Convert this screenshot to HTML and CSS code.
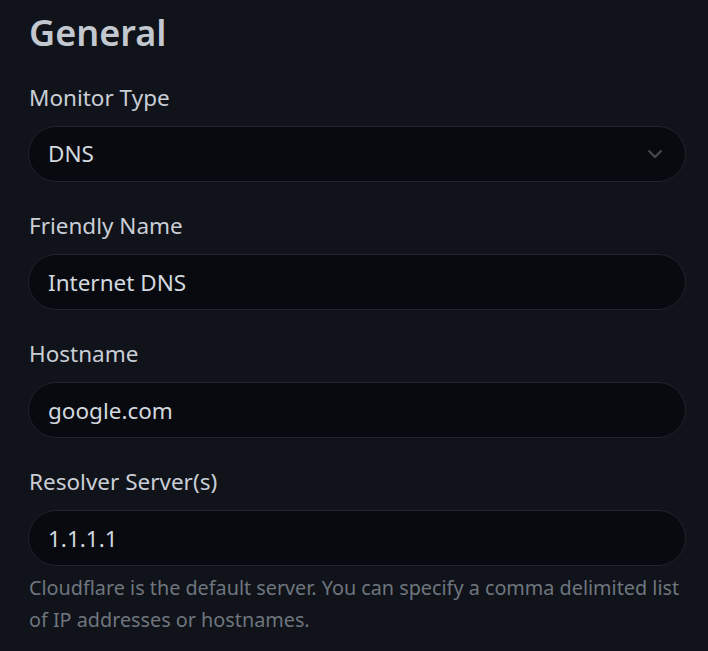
FILE: index.html
```html
<!DOCTYPE html>
<html lang="en">
  <head>
    <meta charset="UTF-8" />
    <meta name="viewport" content="width=device-width, initial-scale=1.0" />
    <title>General</title>
    <link rel="stylesheet" href="styles.css">
  </head>
  <body>
    <div class="form-section">
      <h2 class="section-title">General</h2>

      <div class="field">
        <label class="field-label" for="type">Monitor Type</label>
        <div class="select-wrap">
          <select id="type" class="field-input">
            <option>DNS</option>
          </select>
          <svg class="chevron" width="16" height="10" viewBox="0 0 16 10">
            <path d="M1.5 1.5 L8 8 L14.5 1.5" fill="none" stroke="#45484e" stroke-width="2.2" />
          </svg>
        </div>
      </div>

      <div class="field">
        <label class="field-label" for="name">Friendly Name</label>
        <input id="name" class="field-input" type="text" value="Internet DNS" />
      </div>

      <div class="field">
        <label class="field-label" for="hostname">Hostname</label>
        <input id="hostname" class="field-input" type="text" value="google.com" />
      </div>

      <div class="field">
        <label class="field-label" for="resolver">Resolver Server(s)</label>
        <input id="resolver" class="field-input" type="text" value="1.1.1.1" />
        <div class="help-text">
          Cloudflare is the default server. You can specify a comma delimited list of IP addresses or hostnames.
        </div>
      </div>
    </div>
  </body>
</html>
```

FILE: styles.css
```css
html,
body {
  margin: 0;
  background-color: #101319;
}
body {
  font-family: "Noto Sans", "Open Sans", sans-serif;
  font-size: 24px;
  line-height: 1.5;
  color: #c9ced6;
}
.form-section {
  padding: 0 22px 0 28px;
}
.section-title {
  font-size: 36px;
  font-weight: 600;
  line-height: 43px;
  margin: 11px 0 24px 1px;
  color: #c3c8d0;
}
.field {
  margin-bottom: 24px;
}
.field-label {
  display: block;
  margin: 0 0 8px 1px;
  font-size: 22.5px;
  line-height: 40px;
}
.select-wrap {
  position: relative;
}
.field-input {
  display: block;
  width: 100%;
  box-sizing: border-box;
  height: 56px;
  padding: 9px 19px;
  font-family: inherit;
  font-size: 22.5px;
  line-height: 36px;
  color: #d3d8df;
  background-color: #080a0f;
  border: 1px solid #1f2430;
  border-radius: 28px;
  outline: none;
  appearance: none;
  -webkit-appearance: none;
}
.chevron {
  position: absolute;
  right: 23px;
  top: 23px;
  pointer-events: none;
}
.help-text {
  margin-top: 6px;
  margin-left: 1px;
  font-size: 19.8px;
  line-height: 32px;
  color: #6f767f;
}
```
